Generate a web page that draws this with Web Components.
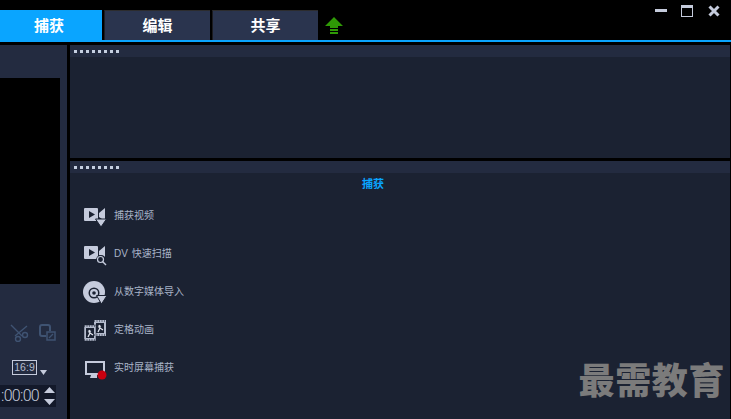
<!DOCTYPE html>
<html lang="zh">
<head>
<meta charset="utf-8">
<title>捕获</title>
<style>
  html, body { margin: 0; height: 100%; background: #000; overflow: hidden; }
  body { font-family: "Noto Sans CJK SC", "Liberation Sans", sans-serif; }
</style>
</head>
<body>
<app-shell>
  <top-bar slot="top">
    <top-tab active>捕获</top-tab>
    <top-tab>编辑</top-tab>
    <top-tab>共享</top-tab>
  </top-bar>
  <player-panel slot="left"></player-panel>
  <grip-panel slot="upper" style="height:113px"></grip-panel>
  <grip-panel slot="lower" style="flex:1">
    <capture-menu heading="捕获">
      <capture-item icon="video">捕获视频</capture-item>
      <capture-item icon="scan">DV 快速扫描</capture-item>
      <capture-item icon="disc">从数字媒体导入</capture-item>
      <capture-item icon="film">定格动画</capture-item>
      <capture-item icon="screen">实时屏幕捕获</capture-item>
    </capture-menu>
  </grip-panel>
  <span slot="mark">最需教育</span>
</app-shell>

<script>
class AppShell extends HTMLElement {
  constructor() {
    super();
    this.attachShadow({ mode: "open" });
    this.shadowRoot.innerHTML = `
      <style>
        :host {
          display: flex;
          flex-direction: column;
          position: relative;
          width: 731px;
          height: 419px;
          background: #000;
          overflow: hidden;
        }
        .main {
          flex: 1;
          display: flex;
          gap: 3px;
          padding: 3px 1px 0 0;
          min-height: 0;
        }
        .right {
          flex: 1;
          display: flex;
          flex-direction: column;
          gap: 3px;
        }
        .mark {
          position: absolute;
          right: 6px;
          bottom: 23px;
          font: 900 36px/1 "Noto Sans CJK SC", sans-serif;
          color: #7b7b7b;
          letter-spacing: 0.6px;
        }
      </style>
      <slot name="top"></slot>
      <div class="main">
        <slot name="left"></slot>
        <div class="right">
          <slot name="upper"></slot>
          <slot name="lower"></slot>
        </div>
      </div>
      <div class="mark"><slot name="mark"></slot></div>
    `;
  }
}

class TopBar extends HTMLElement {
  constructor() {
    super();
    this.attachShadow({ mode: "open" });
    this.shadowRoot.innerHTML = `
      <style>
        :host {
          display: flex;
          height: 42px;
          box-sizing: border-box;
          padding-top: 10px;
          border-bottom: 2px solid #0aa5ff;
          align-items: stretch;
        }
        .tabs { display: flex; gap: 2px; }
        .up { margin: 7px 0 0 7px; width: 18px; height: 17px; }
        .win {
          margin-left: auto;
          margin-top: -5px;
          padding-right: 11px;
          display: flex;
          gap: 14px;
          height: 12px;
        }
        .win svg { width: 12px; height: 12px; display: block; }
        .win svg:last-child { margin-left: 1px; }
      </style>
      <div class="tabs"><slot></slot></div>
      <svg class="up" viewBox="0 0 18 17">
        <path d="M9 0 18 9H13V11H5V9H0Z" fill="#2f9a06"/>
        <rect x="5" y="12" width="8" height="2" fill="#2f9a06"/>
        <rect x="5" y="15" width="8" height="2" fill="#2f9a06"/>
      </svg>
      <div class="win">
        <svg viewBox="0 0 12 12"><rect y="4" width="12" height="3" fill="#c5cbdc"/></svg>
        <svg viewBox="0 0 12 12"><rect x=".5" y=".5" width="11" height="11" fill="none" stroke="#c5cbdc"/><rect width="12" height="3" fill="#c5cbdc"/></svg>
        <svg viewBox="0 0 12 12"><path d="M1.5 1.5 10.5 10.5M10.5 1.5 1.5 10.5" stroke="#c5cbdc" stroke-width="3"/></svg>
      </div>
    `;
  }
}

class TopTab extends HTMLElement {
  constructor() {
    super();
    this.attachShadow({ mode: "open" });
    this.shadowRoot.innerHTML = `
      <style>
        :host {
          display: flex;
          align-items: center;
          justify-content: center;
          width: 106px;
          height: 30px;
          box-sizing: border-box;
          padding-bottom: 2px;
          background: #2a344e;
          border-top: 1px solid #2c2c2e;
          border-left: 1px solid #1c1c20;
          color: #fff;
          font: 700 15px/1 "Noto Sans CJK SC", sans-serif;
        }
        :host([active]) {
          width: 102px;
          padding-right: 4px;
          background: #0aa5ff;
          border: 0;
        }
      </style>
      <slot></slot>
    `;
  }
}

class PlayerPanel extends HTMLElement {
  constructor() {
    super();
    this.attachShadow({ mode: "open" });
    this.shadowRoot.innerHTML = `
      <style>
        :host {
          display: flex;
          flex-direction: column;
          width: 67px;
          height: 374px;
          background: #232b40;
        }
        .screen { width: 60px; height: 206px; margin-top: 33px; background: #000; }
        .tools { display: flex; gap: 10px; margin: 40px 0 0 10px; height: 18px; }
        .tools svg { display: block; }
        .ratio { display: flex; align-items: flex-end; gap: 3px; margin: 18px 0 0 12px; }
        .box {
          width: 25px;
          height: 15px;
          box-sizing: border-box;
          border: 1px solid #c5cbdc;
          color: #b4bbcd;
          font: 10.500px/13px "Liberation Sans", sans-serif;
          text-align: center;
        }
        .time {
          display: flex;
          align-items: center;
          box-sizing: border-box;
          width: 56px;
          height: 22px;
          margin-top: 10px;
          padding-left: 1px;
          background: #13192a;
          color: #c5cbdc;
          font: 300 16px/1 "Roboto", "Liberation Sans", sans-serif;
          letter-spacing: -0.700px;
          white-space: nowrap;
        }
        .time span { flex: none; width: 42px; }
        .time svg { flex: none; margin-left: 1px; }
      </style>
      <div class="screen"></div>
      <div class="tools">
        <svg width="19" height="18" viewBox="0 0 19 18" fill="none" stroke="#3f5372" stroke-width="1.4">
          <path d="M1 1 12 12M17 2 5 12"/>
          <circle cx="15" cy="11" r="2.500"/>
          <circle cx="8" cy="15" r="2.500"/>
        </svg>
        <svg width="17" height="17" viewBox="0 0 17 17" fill="none" stroke="#3f5372" stroke-width="2">
          <path d="M7 12H3A2 2 0 0 1 1 10V3A2 2 0 0 1 3 1H9A2 2 0 0 1 11 3V7"/>
          <rect x="8" y="8" width="8" height="8" stroke-width="1.500"/>
          <path d="M10 14 14 10" stroke-width="1.200"/>
        </svg>
      </div>
      <div class="ratio">
        <div class="box">16:9</div>
        <svg width="7" height="5" viewBox="0 0 7 5"><path d="M0 0H7L3.500 5Z" fill="#c5cbdc"/></svg>
      </div>
      <div class="time">
        <span>:00:00</span>
        <svg width="11" height="18" viewBox="0 0 11 18" fill="#c5cbdc"><path d="M5.500 0 11 6H0ZM0 12H11L5.500 18Z"/></svg>
      </div>
    `;
  }
}

class GripPanel extends HTMLElement {
  constructor() {
    super();
    this.attachShadow({ mode: "open" });
    this.shadowRoot.innerHTML = `
      <style>
        :host {
          display: flex;
          flex-direction: column;
          background: #1b2232;
          min-height: 0;
        }
        .head {
          flex: none;
          display: flex;
          gap: 3px;
          height: 12px;
          box-sizing: border-box;
          padding: 5px 0 0 4px;
          background: #232b40;
        }
        .head i { width: 3px; height: 3px; background: #c5cfe0; }
      </style>
      <div class="head">${"<i></i>".repeat(8)}</div>
      <slot></slot>
    `;
  }
}

class CaptureMenu extends HTMLElement {
  constructor() {
    super();
    this.attachShadow({ mode: "open" });
    this.shadowRoot.innerHTML = `
      <style>
        :host { display: block; }
        h2 {
          margin: 3px 54px 14px 0;
          text-align: center;
          color: #0aa5ff;
          font: 700 11px/14px "Noto Sans CJK SC", sans-serif;
        }
        .list { display: flex; flex-direction: column; gap: 14px; padding-left: 12px; }
      </style>
      <h2>${this.getAttribute("heading")}</h2>
      <div class="list"><slot></slot></div>
    `;
  }
}

const CAMERA = `<path d="M3 4H15A1 1 0 0 1 16 5V16A1 1 0 0 1 15 17H3A1 1 0 0 1 2 16V5A1 1 0 0 1 3 4ZM17 9 23 4V17L17 13Z" fill="#c5cbdc"/>
    <path d="M7 7 13 10.500 7 14Z" fill="#1b2232"/>`;

const ICONS = {
  video: CAMERA + `<path d="M13.500 15H24.500L19 23Z" fill="#c5cbdc" stroke="#1b2232"/>`,
  scan: CAMERA + `<circle cx="19" cy="18" r="5" fill="#1b2232"/>
    <circle cx="18.500" cy="17.500" r="3" fill="none" stroke="#c5cbdc" stroke-width="1.200"/>
    <path d="M20.500 19.500 24 23" stroke="#c5cbdc" stroke-width="1.400"/>`,
  disc: `<circle cx="12" cy="12" r="11" fill="#c5cbdc"/>
    <circle cx="12" cy="13" r="5.500" fill="#1b2232"/>
    <circle cx="12" cy="13" r="4" fill="#c5cbdc"/>
    <circle cx="12" cy="13" r="1.800" fill="#1b2232"/>
    <path d="M14.500 15.500H25L19.500 24Z" fill="#c5cbdc" stroke="#1b2232"/>`,
  film: `<rect x="12" y="2" width="12" height="16" fill="#b4bbcc"/>
    <rect x="14" y="5" width="8" height="10" fill="#1b2232"/>
    <rect x="2" y="7" width="12" height="16" fill="#b4bbcc" stroke="#1b2232" stroke-width=".5"/>
    <rect x="4" y="10" width="8" height="10" fill="#1b2232"/>
    <path d="M12 3H24M12 17H24M2 8H14M2 22H14" stroke="#1b2232" stroke-dasharray="1 1.500"/>
    <path d="M6 19 8 15 7 12M8 15 11 17M6 14 9 13M16 14 18 10 17 7M18 10 21 12M16 9 19 8" stroke="#e2e6ef" stroke-width="1.300" fill="none"/>`,
  screen: `<rect x="4" y="6" width="18" height="12" fill="none" stroke="#c5cbdc" stroke-width="2"/>
    <path d="M9 19H15V22H8Z" fill="#c5cbdc"/>
    <circle cx="20" cy="19" r="4.500" fill="#c8000f"/>`
};

class CaptureItem extends HTMLElement {
  constructor() {
    super();
    this.attachShadow({ mode: "open" });
    this.shadowRoot.innerHTML = `
      <style>
        :host {
          display: flex;
          align-items: center;
          gap: 7px;
          height: 24px;
          color: #a9b4c8;
          font: 10px/1 "Liberation Sans", "Noto Sans CJK SC", sans-serif;
          word-spacing: 1px;
        }
        svg { width: 25px; height: 25px; flex: none; display: block; }
      </style>
      <svg viewBox="0 0 25 25">${ICONS[this.getAttribute("icon")]}</svg>
      <span><slot></slot></span>
    `;
  }
}

customElements.define("app-shell", AppShell);
customElements.define("top-bar", TopBar);
customElements.define("top-tab", TopTab);
customElements.define("player-panel", PlayerPanel);
customElements.define("grip-panel", GripPanel);
customElements.define("capture-menu", CaptureMenu);
customElements.define("capture-item", CaptureItem);
</script>
</body>
</html>
